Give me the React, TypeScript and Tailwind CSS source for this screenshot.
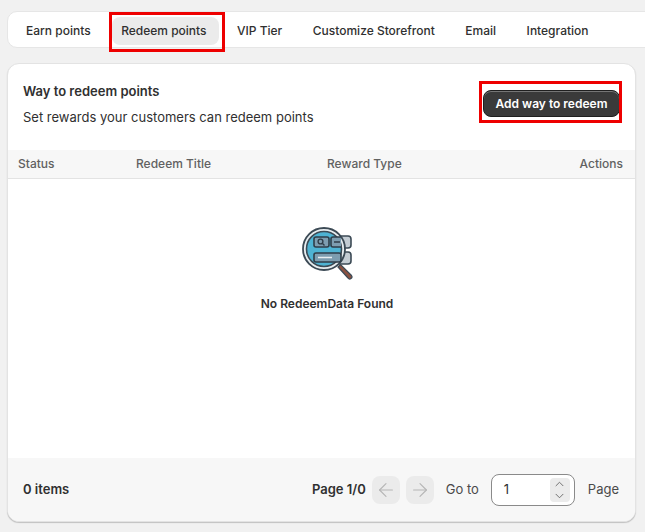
import React from "react";
import { ArrowLeft, ArrowRight, ChevronUp, ChevronDown } from "lucide-react";

const tabs = ["Earn points", "Redeem points", "VIP Tier", "Customize Storefront", "Email", "Integration"];

const EmptyIcon = () => (
  <svg width="56" height="56" viewBox="0 0 56 56" fill="none">
    <rect x="33" y="11" width="20" height="12" rx="3" fill="#c3ccd3" stroke="#3c4a55" strokeWidth="1.6" />
    <rect x="33" y="27" width="20" height="12" rx="3" fill="#c3ccd3" stroke="#3c4a55" strokeWidth="1.6" />
    <path d="M40 42l2.500-2.500 11 11a2 2 0 0 1-3.500 2.500z" fill="#8a5140" stroke="#3c4a55" strokeWidth="1.2" />
    <circle cx="26" cy="24" r="21" fill="#e8eef1" stroke="#3c4a55" strokeWidth="1.8" />
    <circle cx="26" cy="24" r="17.500" fill="#4eb3d3" stroke="#3c4a55" strokeWidth="1.6" />
    <rect x="16" y="12" width="15" height="10" rx="2" fill="#7d9db0" stroke="#2f3d48" strokeWidth="1.6" />
    <circle cx="22.500" cy="16.500" r="2.400" stroke="#2f3d48" strokeWidth="1.4" />
    <path d="M24.500 18.500l2 2" stroke="#2f3d48" strokeWidth="1.4" />
    <path d="M43 12h-8a2 2 0 0 0-2 2v6a2 2 0 0 0 2 2h8" fill="#7d9db0" stroke="#2f3d48" strokeWidth="1.6" />
    <path d="M36 17h6" stroke="#2f3d48" strokeWidth="1.5" />
    <rect x="16" y="28" width="27" height="9" rx="2" fill="#7d9db0" stroke="#2f3d48" strokeWidth="1.6" />
    <path d="M20 32.500h14" stroke="#e8eef1" strokeWidth="1.5" />
  </svg>
);

const App = () => {
  return (
    <div className="relative h-[532px] w-[645px] overflow-hidden bg-[#f1f1f1] font-['Inter',sans-serif] text-[12px] text-[#303030]">
      <div className="pl-[7px] pt-[11px]">
        <div className="flex h-[37px] w-[660px] items-start gap-[9.5px] rounded-[10px] border border-[#e6e6e6] bg-white pl-[9px] pt-[5px] font-medium">
          {tabs.map((tab) => (
            <div
              key={tab}
              className={`flex h-[28px] items-center rounded-lg pl-[9px] pr-3 ${tab === "Redeem points" ? "bg-[#ebebeb]" : ""}`}
            >
              {tab}
            </div>
          ))}
        </div>
      </div>

      <div className="ml-[7px] mt-[15px] flex h-[459px] w-[629px] flex-col overflow-hidden rounded-xl border border-[#e3e3e3] bg-white shadow-[0_1px_1px_rgba(0,0,0,0.2)]">
        <div className="flex h-[86px] justify-between pl-[15px] pr-[15px] pt-[18px]">
          <div>
            <div className="text-[13px] font-semibold leading-[18px]">Way to redeem points</div>
            <div className="mt-2 text-[13px] leading-[18px]">Set rewards your customers can redeem points</div>
          </div>
          <button className="mt-2 h-[27px] w-[137px] rounded-lg border border-[#1f1f1f] bg-[#3a3a3a] text-[12px] font-semibold text-white shadow-[inset_0_1px_0_rgba(255,255,255,0.3)]">
            Add way to redeem
          </button>
        </div>

        <div className="grid h-[29px] grid-cols-[118px_191px_1fr_auto] items-center border-b border-[#e3e3e3] bg-[#f7f7f7] pl-[10px] pr-3 font-medium text-[#616161]">
          <div>Status</div>
          <div>Redeem Title</div>
          <div>Reward Type</div>
          <div>Actions</div>
        </div>

        <div className="flex flex-1 flex-col items-center pl-[11px] pt-[46px]">
          <div className="-ml-[2px]">
            <EmptyIcon />
          </div>
          <div className="mt-[14px] font-semibold">No RedeemData Found</div>
        </div>

        <div className="flex h-[63px] items-center justify-between bg-[#f7f7f7] pl-[15px] pr-4 pt-px text-[13px]">
          <div className="font-semibold">0 items</div>
          <div className="flex items-center">
            <div className="font-semibold">Page 1/0</div>
            <div className="ml-[6px] flex h-7 w-7 items-center justify-center rounded-lg bg-[#ebebeb] text-[#b5b5b5]">
              <ArrowLeft size={22} strokeWidth={1.2} />
            </div>
            <div className="ml-[6px] flex h-7 w-7 items-center justify-center rounded-lg bg-[#ebebeb] text-[#b5b5b5]">
              <ArrowRight size={22} strokeWidth={1.2} />
            </div>
            <div className="ml-3 text-[#4a4a4a]">Go to</div>
            <div className="ml-3 flex h-8 w-[84px] items-center justify-between rounded-lg border border-[#8a8a8a] bg-white pl-3 pr-1">
              <span>1</span>
              <div className="flex h-6 w-5 flex-col items-center justify-center rounded bg-[#ebebeb] text-[#616161]">
                <ChevronUp size={15} strokeWidth={1.5} className="-my-px" />
                <ChevronDown size={15} strokeWidth={1.5} className="-my-px" />
              </div>
            </div>
            <div className="ml-[13px] text-[#4a4a4a]">Page</div>
          </div>
        </div>
      </div>

      {/* red annotation boxes from the screenshot */}
      <div className="absolute left-[109px] top-[12px] h-[40px] w-[116px] border-[3px] border-[#ee0000]" />
      <div className="absolute left-[479px] top-[81px] h-[42px] w-[143px] border-[3px] border-[#ee0000]" />
    </div>
  );
};

export default App;
